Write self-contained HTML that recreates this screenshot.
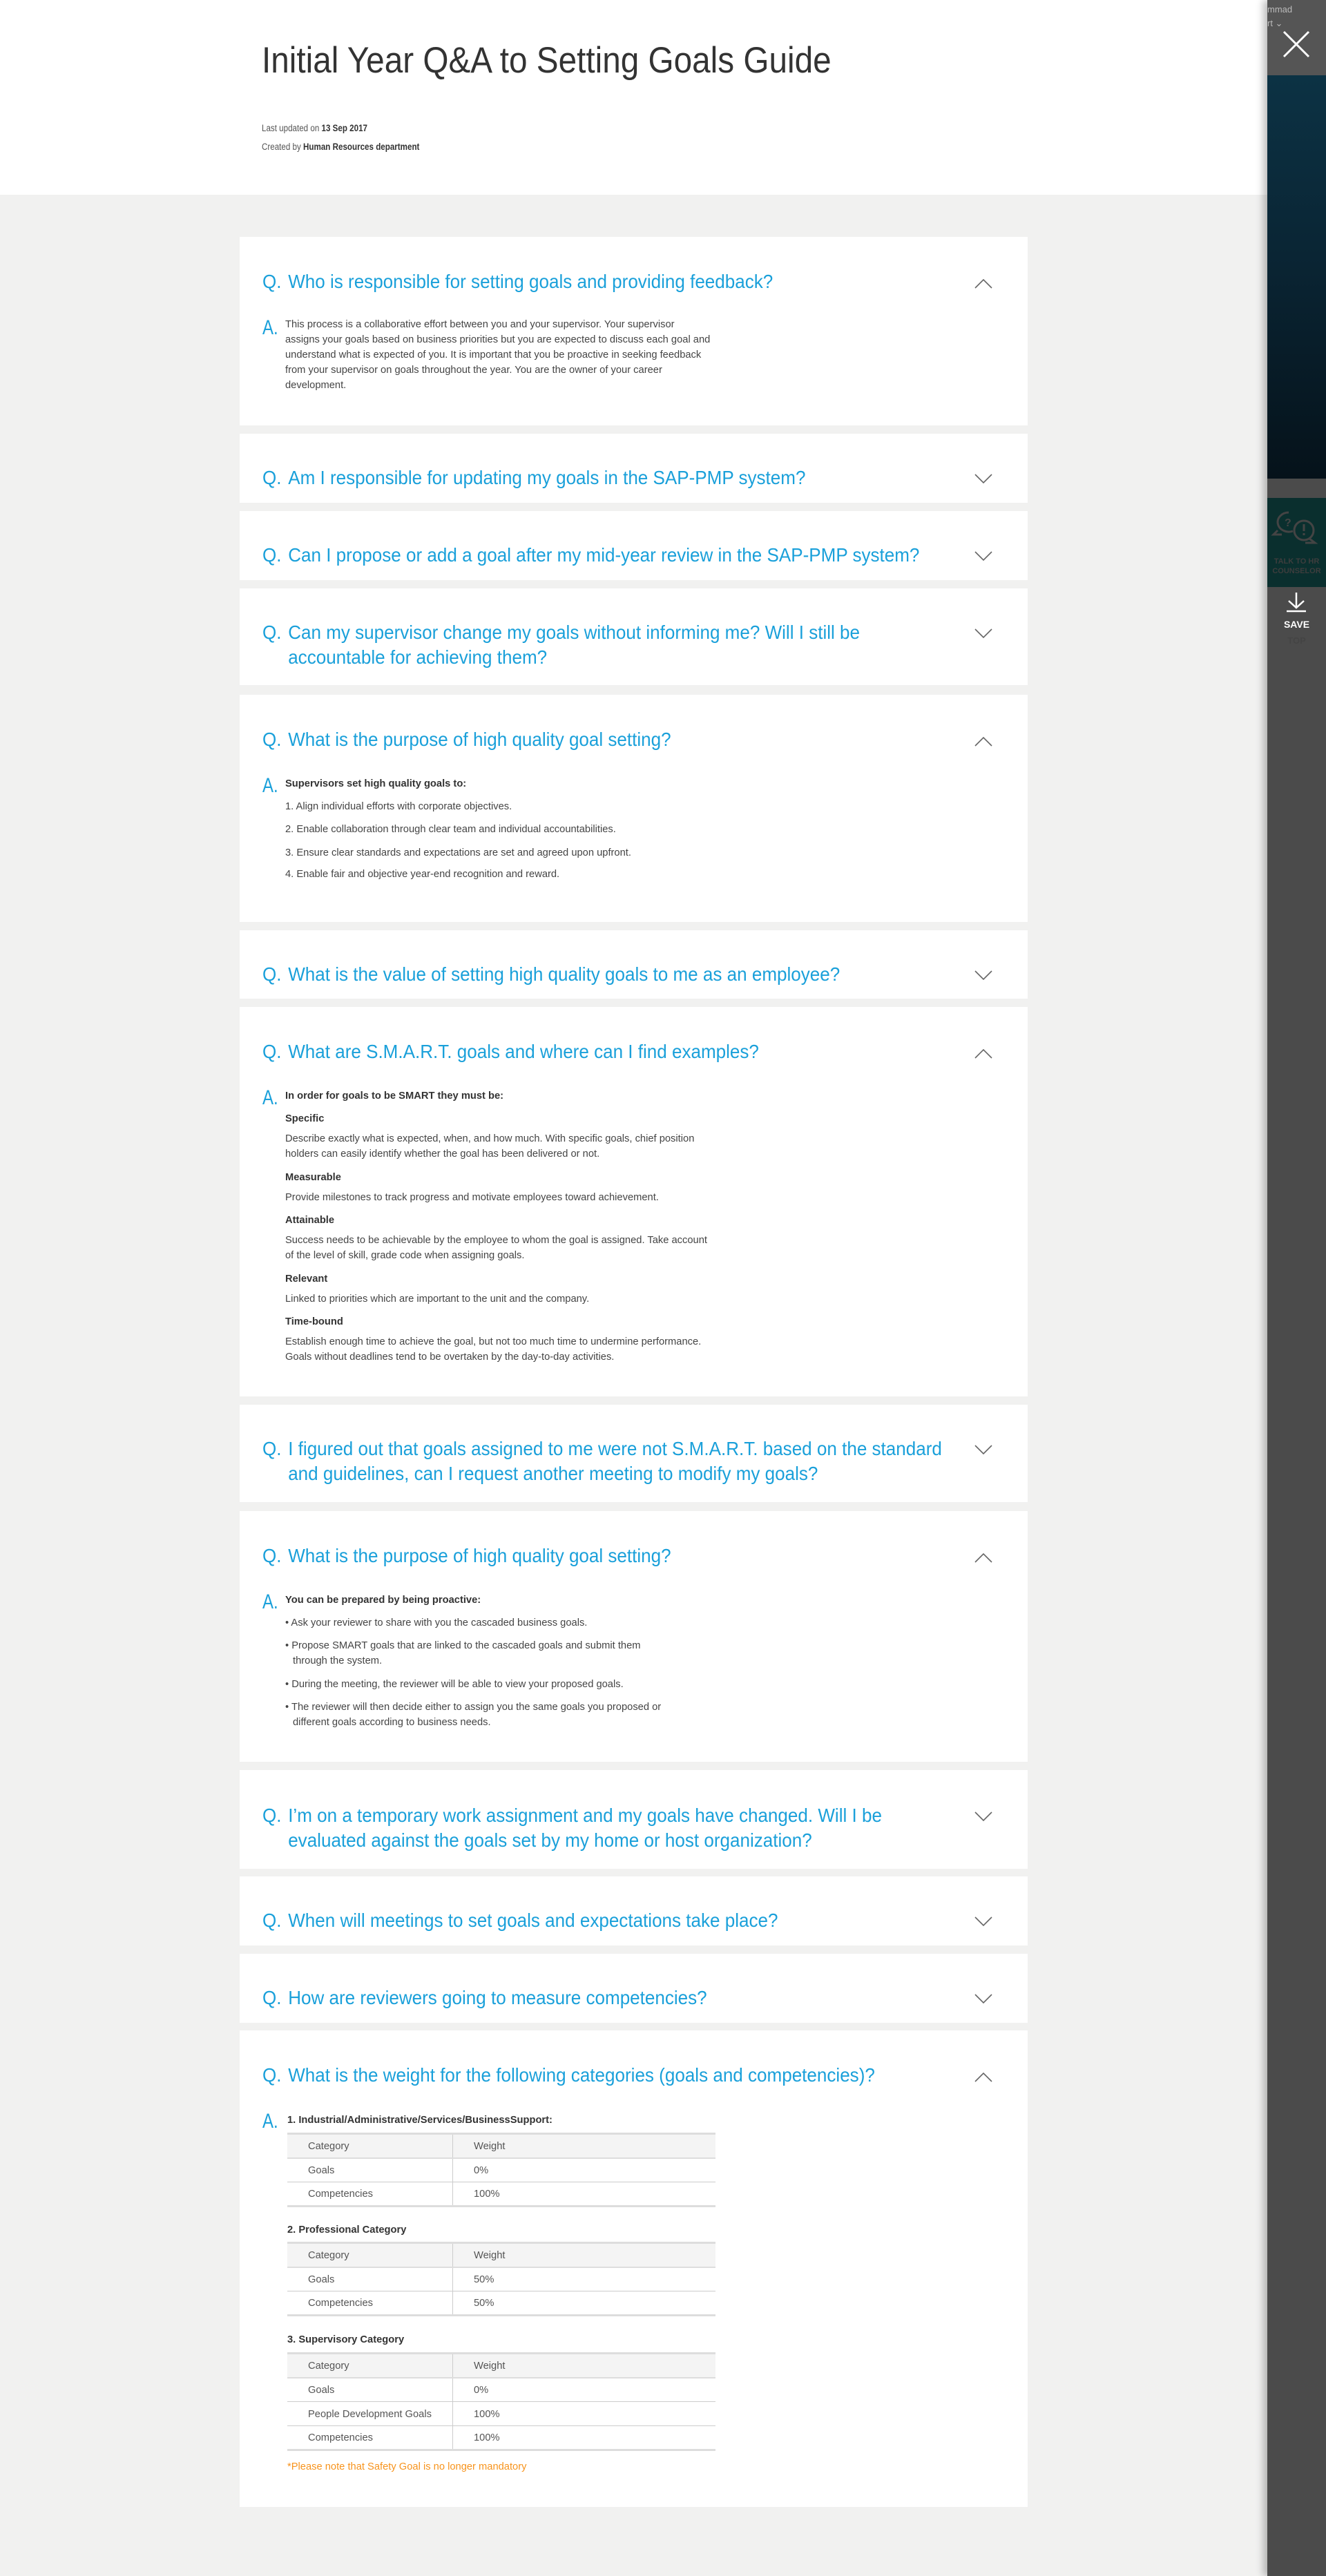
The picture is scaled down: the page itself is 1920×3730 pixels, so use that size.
<!DOCTYPE html>
<html><head><meta charset="utf-8"><style>
*{margin:0;padding:0;box-sizing:border-box}
body{width:1920px;height:3730px;background:#f1f1f0;position:relative;overflow:hidden;font-family:"Liberation Sans",sans-serif;color:#444}
.hdr{position:absolute;left:0;top:0;width:1920px;height:282px;background:#fff}
.title{position:absolute;left:379px;top:58px;font-size:53px;line-height:60px;color:#333;white-space:nowrap;transform:scaleX(.90);transform-origin:0 0}
.meta{position:absolute;left:379px;font-size:13.5px;color:#555;white-space:nowrap;transform:scaleX(.86);transform-origin:0 0}
.meta b{color:#333}
.card{position:absolute;left:347px;width:1141px;background:#fff}
.q{position:absolute;left:33px;top:47px;font-size:28px;line-height:36px;color:#1aa0da;white-space:nowrap;transform:scaleX(.93);transform-origin:0 0}
.q .t{position:absolute;left:40px;top:0}
.chev{position:absolute;left:1064px;width:26px;height:14px}
.A{position:absolute;left:33px;top:114px;font-size:30px;line-height:36px;color:#1aa0da;transform:scaleX(.8);transform-origin:0 0}
.l{position:absolute;left:66px;font-size:15px;line-height:22px;white-space:nowrap;color:#444;transform:scaleX(.98);transform-origin:0 0}
.l b{color:#333}
.bl2{left:77px}
table{position:absolute;left:69px;width:620px;border-collapse:collapse;font-size:15px;color:#555}
td{height:35px;padding:0 0 0 30px;border-bottom:1px solid #ccc}
td:first-child{width:239px;border-right:1px solid #ccc}
tr.h td{background:#f4f4f4;border-top:3px solid #ddd;border-bottom:2px solid #ddd}
tr:last-child td{border-bottom:3px solid #ddd}
td span{display:inline-block;transform:scaleX(.98);transform-origin:0 0;white-space:nowrap}
.panel{position:absolute;left:1835px;top:0;width:85px;height:3730px;background:#4b4b4b;box-shadow:-6px 0 10px rgba(0,0,0,.25)}
</style></head><body>
<div class="hdr">
<div class="title">Initial Year Q&amp;A to Setting Goals Guide</div>
<div class="meta" style="top:178px">Last updated on <b>13 Sep 2017</b></div>
<div class="meta" style="top:205px">Created by <b>Human Resources department</b></div>
</div>

<svg width="0" height="0" style="position:absolute"><defs>
<symbol id="up" viewBox="0 0 26 14"><path d="M1 13 L13 1 L25 13" fill="none" stroke="#666" stroke-width="1.6"/></symbol>
<symbol id="dn" viewBox="0 0 26 14"><path d="M1 1 L13 13 L25 1" fill="none" stroke="#666" stroke-width="1.6"/></symbol>
</defs></svg>

<div class="card" style="top:343px;height:273px">
<div class="q">Q.<span class="t">Who is responsible for setting goals and providing feedback?</span></div>
<svg class="chev" style="top:61px"><use href="#up"/></svg>
<div class="A">A.</div>
<div class="l" style="top:116px">This process is a collaborative effort between you and your supervisor. Your supervisor</div>
<div class="l" style="top:138px">assigns your goals based on business priorities but you are expected to discuss each goal and</div>
<div class="l" style="top:160px">understand what is expected of you. It is important that you be proactive in seeking feedback</div>
<div class="l" style="top:182px">from your supervisor on goals throughout the year. You are the owner of your career</div>
<div class="l" style="top:204px">development.</div>
</div>

<div class="card" style="top:628px;height:100px">
<div class="q" style="top:46px">Q.<span class="t">Am I responsible for updating my goals in the SAP-PMP system?</span></div>
<svg class="chev" style="top:58px"><use href="#dn"/></svg>
</div>

<div class="card" style="top:740px;height:100px">
<div class="q" style="top:46px">Q.<span class="t">Can I propose or add a goal after my mid-year review in the SAP-PMP system?</span></div>
<svg class="chev" style="top:58px"><use href="#dn"/></svg>
</div>

<div class="card" style="top:852px;height:140px">
<div class="q" style="top:46px">Q.<span class="t">Can my supervisor change my goals without informing me? Will I still be<br>accountable for achieving them?</span></div>
<svg class="chev" style="top:58px"><use href="#dn"/></svg>
</div>

<div class="card" style="top:1006px;height:329px">
<div class="q">Q.<span class="t">What is the purpose of high quality goal setting?</span></div>
<svg class="chev" style="top:61px"><use href="#up"/></svg>
<div class="A">A.</div>
<div class="l" style="top:118px"><b>Supervisors set high quality goals to:</b></div>
<div class="l" style="top:151px">1. Align individual efforts with corporate objectives.</div>
<div class="l" style="top:184px">2. Enable collaboration through clear team and individual accountabilities.</div>
<div class="l" style="top:218px">3. Ensure clear standards and expectations are set and agreed upon upfront.</div>
<div class="l" style="top:249px">4. Enable fair and objective year-end recognition and reward.</div>
</div>

<div class="card" style="top:1347px;height:99px">
<div class="q" style="top:46px">Q.<span class="t">What is the value of setting high quality goals to me as an employee?</span></div>
<svg class="chev" style="top:58px"><use href="#dn"/></svg>
</div>

<div class="card" style="top:1458px;height:564px">
<div class="q">Q.<span class="t">What are S.M.A.R.T. goals and where can I find examples?</span></div>
<svg class="chev" style="top:61px"><use href="#up"/></svg>
<div class="A">A.</div>
<div class="l" style="top:118px"><b>In order for goals to be SMART they must be:</b></div>
<div class="l" style="top:151px"><b>Specific</b></div>
<div class="l" style="top:180px">Describe exactly what is expected, when, and how much. With specific goals, chief position</div>
<div class="l" style="top:202px">holders can easily identify whether the goal has been delivered or not.</div>
<div class="l" style="top:236px"><b>Measurable</b></div>
<div class="l" style="top:265px">Provide milestones to track progress and motivate employees toward achievement.</div>
<div class="l" style="top:298px"><b>Attainable</b></div>
<div class="l" style="top:327px">Success needs to be achievable by the employee to whom the goal is assigned. Take account</div>
<div class="l" style="top:349px">of the level of skill, grade code when assigning goals.</div>
<div class="l" style="top:383px"><b>Relevant</b></div>
<div class="l" style="top:412px">Linked to priorities which are important to the unit and the company.</div>
<div class="l" style="top:445px"><b>Time-bound</b></div>
<div class="l" style="top:474px">Establish enough time to achieve the goal, but not too much time to undermine performance.</div>
<div class="l" style="top:496px">Goals without deadlines tend to be overtaken by the day-to-day activities.</div>
</div>

<div class="card" style="top:2034px;height:141px">
<div class="q" style="top:46px">Q.<span class="t">I figured out that goals assigned to me were not S.M.A.R.T. based on the standard<br>and guidelines, can I request another meeting to modify my goals?</span></div>
<svg class="chev" style="top:58px"><use href="#dn"/></svg>
</div>

<div class="card" style="top:2188px;height:363px">
<div class="q">Q.<span class="t">What is the purpose of high quality goal setting?</span></div>
<svg class="chev" style="top:61px"><use href="#up"/></svg>
<div class="A">A.</div>
<div class="l" style="top:118px"><b>You can be prepared by being proactive:</b></div>
<div class="l" style="top:151px">• Ask your reviewer to share with you the cascaded business goals.</div>
<div class="l" style="top:184px">• Propose SMART goals that are linked to the cascaded goals and submit them</div>
<div class="l bl2" style="top:206px">through the system.</div>
<div class="l" style="top:240px">• During the meeting, the reviewer will be able to view your proposed goals.</div>
<div class="l" style="top:273px">• The reviewer will then decide either to assign you the same goals you proposed or</div>
<div class="l bl2" style="top:295px">different goals according to business needs.</div>
</div>

<div class="card" style="top:2563px;height:143px">
<div class="q" style="top:48px">Q.<span class="t">I’m on a temporary work assignment and my goals have changed. Will I be<br>evaluated against the goals set by my home or host organization?</span></div>
<svg class="chev" style="top:60px"><use href="#dn"/></svg>
</div>

<div class="card" style="top:2717px;height:100px">
<div class="q" style="top:46px">Q.<span class="t">When will meetings to set goals and expectations take place?</span></div>
<svg class="chev" style="top:58px"><use href="#dn"/></svg>
</div>

<div class="card" style="top:2829px;height:100px">
<div class="q" style="top:46px">Q.<span class="t">How are reviewers going to measure competencies?</span></div>
<svg class="chev" style="top:58px"><use href="#dn"/></svg>
</div>

<div class="card" style="top:2940px;height:690px">
<div class="q">Q.<span class="t">What is the weight for the following categories (goals and competencies)?</span></div>
<svg class="chev" style="top:61px"><use href="#up"/></svg>
<div class="A">A.</div>
<div class="l" style="top:119px;left:69px"><b>1. Industrial/Administrative/Services/BusinessSupport:</b></div>
<table style="top:148px">
<tr class="h"><td><span>Category</span></td><td><span>Weight</span></td></tr>
<tr><td><span>Goals</span></td><td><span>0%</span></td></tr>
<tr><td><span>Competencies</span></td><td><span>100%</span></td></tr>
</table>
<div class="l" style="top:278px;left:69px"><b>2. Professional Category</b></div>
<table style="top:306px">
<tr class="h"><td><span>Category</span></td><td><span>Weight</span></td></tr>
<tr><td><span>Goals</span></td><td><span>50%</span></td></tr>
<tr><td><span>Competencies</span></td><td><span>50%</span></td></tr>
</table>
<div class="l" style="top:437px;left:69px"><b>3. Supervisory Category</b></div>
<table style="top:466px">
<tr class="h"><td><span>Category</span></td><td><span>Weight</span></td></tr>
<tr><td><span>Goals</span></td><td><span>0%</span></td></tr>
<tr><td><span>People Development Goals</span></td><td><span>100%</span></td></tr>
<tr><td><span>Competencies</span></td><td><span>100%</span></td></tr>
</table>
<div class="l" style="top:621px;left:69px;color:#f7941d">*Please note that Safety Goal is no longer mandatory</div>
</div>

<div class="panel">
<div style="position:absolute;left:0;top:0;width:85px;height:109px;background:#555"></div>
<div style="position:absolute;left:0;top:6px;font-size:13px;color:#bbb;white-space:nowrap">mmad</div>
<div style="position:absolute;left:0;top:26px;font-size:13px;color:#bbb;white-space:nowrap">rt ⌄</div>
<svg style="position:absolute;left:22px;top:44px" width="40" height="40"><path d="M2 2 L38 38 M38 2 L2 38" stroke="#fff" stroke-width="3"/></svg>
<div style="position:absolute;left:0;top:109px;width:85px;height:584px;background:linear-gradient(180deg,#0c3244 0%,#0a2534 45%,#05121a 100%)"></div>
<div style="position:absolute;left:0;top:721px;width:85px;height:129px;background:#0a2f2e"></div>
<svg style="position:absolute;left:5px;top:740px" width="70" height="60" viewBox="0 0 70 60"><path d="M26 2a16 14 0 1 0 6 27l0 0M10 28l-6 6h12" fill="none" stroke="#444" stroke-width="3"/><text x="20" y="22" font-size="16" font-weight="bold" fill="#444" font-family="Liberation Sans">?</text><circle cx="48" cy="28" r="14" fill="none" stroke="#444" stroke-width="3"/><path d="M56 40l8 6h-14" fill="none" stroke="#444" stroke-width="3"/><rect x="46.5" y="19" width="3" height="10" fill="#444"/><rect x="46.5" y="32" width="3" height="3" fill="#444"/></svg>
<div style="position:absolute;left:0;top:806px;width:85px;text-align:center;font-size:11px;line-height:14px;font-weight:bold;color:#3d3d3d">TALK TO HR<br>COUNSELOR</div>
<svg style="position:absolute;left:27px;top:857px" width="30" height="30"><path d="M15 1 V23 M4 13 L15 23 L26 13 M1 28 H29" fill="none" stroke="#fff" stroke-width="2.5"/></svg>
<div style="position:absolute;left:0;top:896px;width:85px;text-align:center;font-size:14px;font-weight:bold;color:#fff">SAVE</div>
<div style="position:absolute;left:0;top:920px;width:85px;text-align:center;font-size:13px;font-weight:bold;color:#444">TOP</div>
</div>
</body></html>
